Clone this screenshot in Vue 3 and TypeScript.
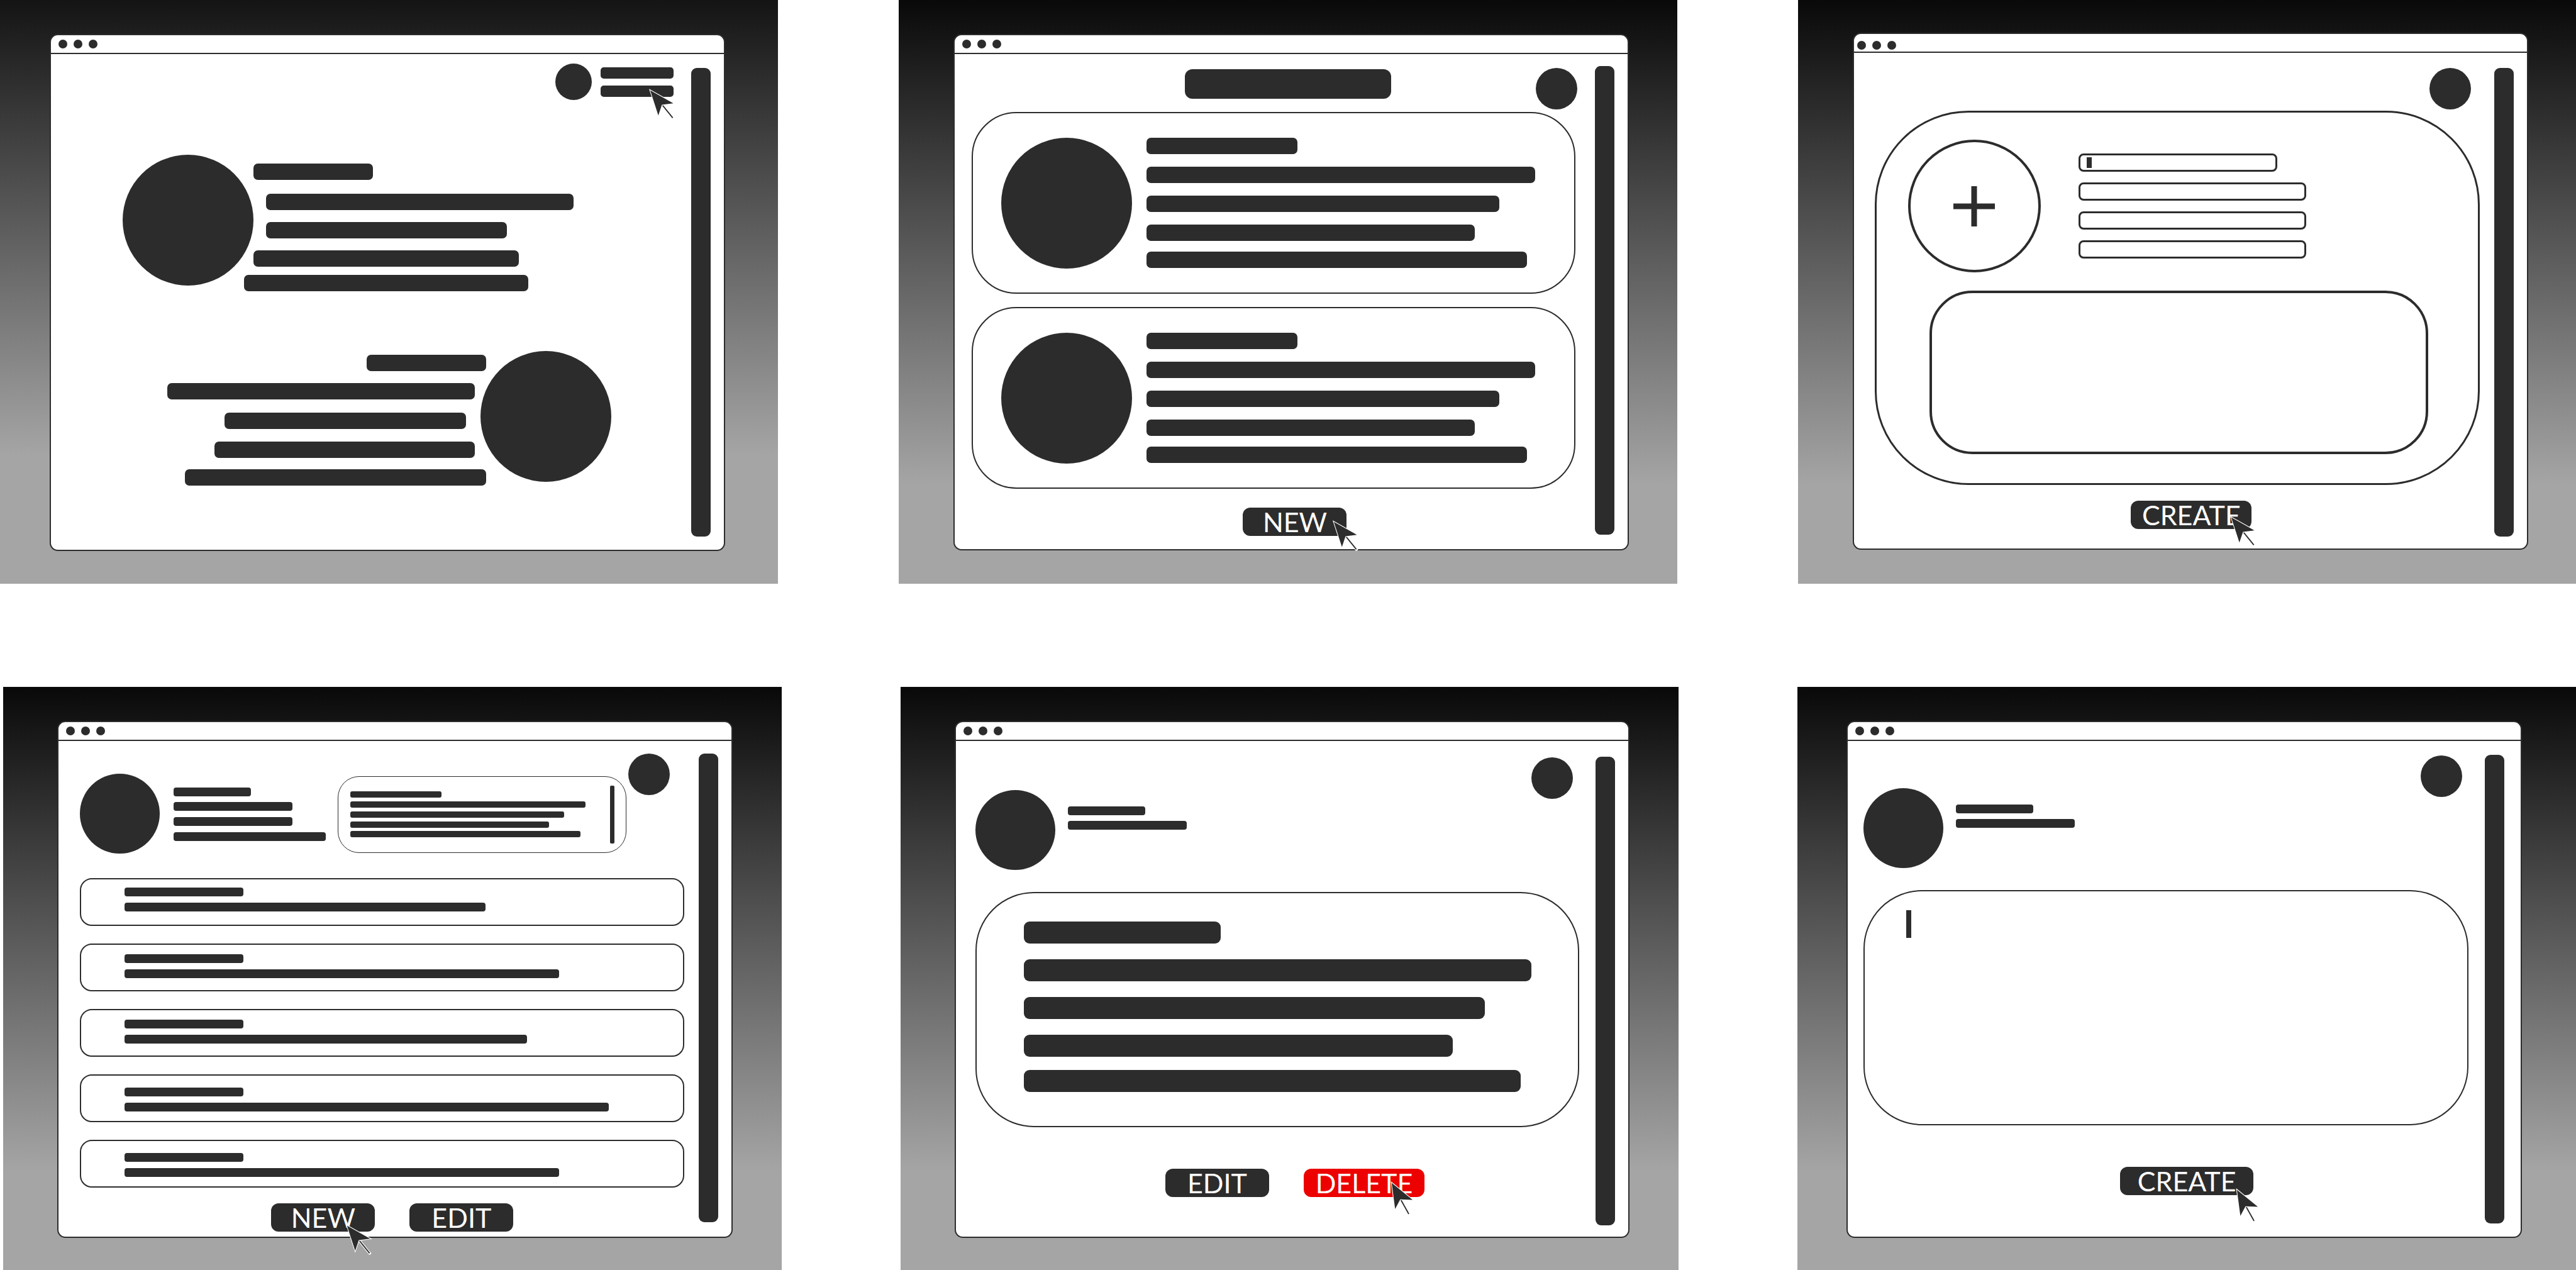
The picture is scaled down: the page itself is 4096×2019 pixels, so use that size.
<script setup lang="ts">
interface Line {
  width: number
  gap?: number
  indent?: number
}

interface Entry {
  top: number
  lines: Line[]
}

const introLines: Line[] = [
  { width: 190, indent: 15 },
  { width: 489, gap: 22, indent: 35 },
  { width: 383, gap: 19, indent: 35 },
  { width: 422, gap: 19, indent: 15 },
  { width: 452, gap: 13 },
]

const aboutLines: Line[] = [
  { width: 190 },
  { width: 489, gap: 19, indent: 18 },
  { width: 384, gap: 21, indent: 32 },
  { width: 414, gap: 20, indent: 18 },
  { width: 479, gap: 18 },
]

const cardLines: Line[] = [
  { width: 240 },
  { width: 618, gap: 20 },
  { width: 561, gap: 20 },
  { width: 522, gap: 20 },
  { width: 605, gap: 17 },
]

const profileLines: Line[] = [
  { width: 123 },
  { width: 189, gap: 9 },
  { width: 189, gap: 10 },
  { width: 242, gap: 10 },
]

const noteLines: Line[] = [
  { width: 145 },
  { width: 374, gap: 6 },
  { width: 340, gap: 6 },
  { width: 316, gap: 6 },
  { width: 366, gap: 5 },
]

const entries: Entry[] = [574, 691, 640, 770, 691].map((width, i) => ({
  top: [13, 15, 15, 19, 19][i],
  lines: [{ width: 189 }, { width, gap: 10 }],
}))

const authorLines: Line[] = [{ width: 123 }, { width: 189, gap: 9 }]

const postLines: Line[] = [
  { width: 313 },
  { width: 807, gap: 25 },
  { width: 733, gap: 25 },
  { width: 682, gap: 25 },
  { width: 790, gap: 21 },
]

const fields = ['Name', 'Breed', 'Age', 'Location']

function lineStyle(line: Line, side: 'Left' | 'Right' = 'Left') {
  return {
    width: `${line.width}px`,
    marginTop: `${line.gap ?? 0}px`,
    [`margin${side}`]: `${line.indent ?? 0}px`,
  }
}
</script>

<template>
  <main class="board">
    <div class="row row-top">
      <!-- Landing page -->
      <section class="screen s1">
        <article class="window">
          <header class="titlebar"><i class="dot" /><i class="dot" /><i class="dot" /></header>
          <div class="body">
            <div class="content">
              <nav class="menu">
                <div class="disc disc-menu" />
                <div class="menu-items">
                  <div class="bar bar-menu" />
                  <div class="bar bar-menu">
                    <svg class="cursor at-menu" viewBox="540 128 136 164" aria-hidden="true">
                      <path class="halo" d="M613 217L665 281" />
                      <path class="tail" d="M610 213L665 281" />
                      <path class="arrow" d="M546 135L668 204L608 212L589 268Z" />
                    </svg>
                  </div>
                </div>
              </nav>
              <div class="feature">
                <div class="disc disc-large" />
                <div class="lines feature-lines">
                  <div v-for="(l, i) in introLines" :key="i" class="bar bar-m" :style="lineStyle(l)" />
                </div>
              </div>
              <div class="feature feature-reverse">
                <div class="lines feature-lines">
                  <div v-for="(l, i) in aboutLines" :key="i" class="bar bar-m" :style="lineStyle(l, 'Right')" />
                </div>
                <div class="disc disc-large" />
              </div>
            </div>
            <div class="scroll" />
          </div>
        </article>
      </section>

      <!-- List of profiles -->
      <section class="screen s2">
        <article class="window">
          <header class="titlebar"><i class="dot" /><i class="dot" /><i class="dot" /></header>
          <div class="body">
            <div class="content">
              <div class="heading">
                <div class="bar bar-title" />
                <div class="disc disc-user" />
              </div>
              <div class="cards">
                <div v-for="n in 2" :key="n" class="card profile-card">
                  <div class="disc disc-large" />
                  <div class="lines">
                    <div v-for="(l, i) in cardLines" :key="i" class="bar bar-m" :style="lineStyle(l)" />
                  </div>
                </div>
              </div>
              <div class="actions">
                <button type="button" class="btn">
                  NEW
                  <svg class="cursor at-new" viewBox="540 128 136 164" aria-hidden="true">
                    <path class="halo" d="M613 217L665 281" />
                    <path class="tail" d="M610 213L665 281" />
                    <path class="arrow" d="M546 135L668 204L608 212L589 268Z" />
                  </svg>
                </button>
              </div>
            </div>
            <div class="scroll" />
          </div>
        </article>
      </section>

      <!-- New profile form -->
      <section class="screen s3">
        <article class="window">
          <header class="titlebar"><i class="dot" /><i class="dot" /><i class="dot" /></header>
          <div class="body">
            <form class="content" @submit.prevent>
              <div class="heading"><div class="disc disc-user" /></div>
              <div class="card form-card">
                <div class="form-top">
                  <button type="button" class="upload" aria-label="Add photo">
                    <svg viewBox="0 0 66 66" aria-hidden="true">
                      <path d="M0 33H66M33 1V65" />
                    </svg>
                  </button>
                  <div class="fields">
                    <div v-for="(f, i) in fields" :key="f" class="field" :class="{ short: i === 0 }">
                      <input type="text" :aria-label="f" />
                      <span v-if="i === 0" class="caret" />
                    </div>
                  </div>
                </div>
                <textarea class="bio" aria-label="Description" />
              </div>
              <div class="actions">
                <button type="submit" class="btn btn-wide">
                  CREATE
                  <svg class="cursor at-create" viewBox="540 128 136 164" aria-hidden="true">
                    <path class="halo" d="M613 217L665 281" />
                    <path class="tail" d="M610 213L665 281" />
                    <path class="arrow" d="M546 135L668 204L608 212L589 268Z" />
                  </svg>
                </button>
              </div>
            </form>
            <div class="scroll" />
          </div>
        </article>
      </section>
    </div>

    <div class="row row-bottom">
      <!-- Profile with its entries -->
      <section class="screen s4">
        <article class="window">
          <header class="titlebar"><i class="dot" /><i class="dot" /><i class="dot" /></header>
          <div class="body">
            <div class="content">
              <div class="profile">
                <div class="disc disc-avatar" />
                <div class="lines profile-lines">
                  <div v-for="(l, i) in profileLines" :key="i" class="bar bar-s" :style="lineStyle(l)" />
                </div>
                <div class="notes">
                  <div class="lines">
                    <div v-for="(l, i) in noteLines" :key="i" class="bar bar-xs" :style="lineStyle(l)" />
                  </div>
                  <div class="notes-scroll" />
                </div>
                <div class="disc disc-user" />
              </div>
              <ul class="entries">
                <li v-for="(e, i) in entries" :key="i" class="entry" :style="{ paddingTop: `${e.top}px` }">
                  <div v-for="(l, j) in e.lines" :key="j" class="bar bar-s" :style="lineStyle(l)" />
                </li>
              </ul>
              <div class="actions">
                <button type="button" class="btn">
                  NEW
                  <svg class="cursor at-new-entry" viewBox="540 128 136 164" aria-hidden="true">
                    <path class="halo" d="M613 217L665 281" />
                    <path class="tail" d="M610 213L665 281" />
                    <path class="arrow" d="M546 135L668 204L608 212L589 268Z" />
                  </svg>
                </button>
                <button type="button" class="btn">EDIT</button>
              </div>
            </div>
            <div class="scroll" />
          </div>
        </article>
      </section>

      <!-- Single entry -->
      <section class="screen s5">
        <article class="window">
          <header class="titlebar"><i class="dot" /><i class="dot" /><i class="dot" /></header>
          <div class="body">
            <div class="content">
              <div class="author">
                <div class="disc disc-avatar" />
                <div class="lines author-lines">
                  <div v-for="(l, i) in authorLines" :key="i" class="bar bar-s" :style="lineStyle(l)" />
                </div>
                <div class="disc disc-user" />
              </div>
              <div class="card post">
                <div v-for="(l, i) in postLines" :key="i" class="bar bar-l" :style="lineStyle(l)" />
              </div>
              <div class="actions">
                <button type="button" class="btn">EDIT</button>
                <button type="button" class="btn btn-wide btn-danger">
                  DELETE
                  <svg class="cursor at-delete" viewBox="1264 130 122 182" aria-hidden="true">
                    <path class="halo" d="M1321 232L1360 302" />
                    <path class="tail" d="M1318 227L1360 302" />
                    <path class="arrow" d="M1270 138L1380 228L1315 225L1288 276Z" />
                  </svg>
                </button>
              </div>
            </div>
            <div class="scroll" />
          </div>
        </article>
      </section>

      <!-- Entry editor -->
      <section class="screen s6">
        <article class="window">
          <header class="titlebar"><i class="dot" /><i class="dot" /><i class="dot" /></header>
          <div class="body">
            <form class="content" @submit.prevent>
              <div class="author">
                <div class="disc disc-avatar" />
                <div class="lines author-lines">
                  <div v-for="(l, i) in authorLines" :key="i" class="bar bar-s" :style="lineStyle(l)" />
                </div>
                <div class="disc disc-user" />
              </div>
              <div class="editor">
                <textarea class="card post" aria-label="Entry text" />
                <span class="caret caret-tall" />
              </div>
              <div class="actions">
                <button type="submit" class="btn btn-widest">
                  CREATE
                  <svg class="cursor at-create-entry" viewBox="1264 130 122 182" aria-hidden="true">
                    <path class="halo" d="M1321 232L1360 302" />
                    <path class="tail" d="M1318 227L1360 302" />
                    <path class="arrow" d="M1270 138L1380 228L1315 225L1288 276Z" />
                  </svg>
                </button>
              </div>
            </form>
            <div class="scroll" />
          </div>
        </article>
      </section>
    </div>
  </main>
</template>

<style>
body {
  background: #fff;
}
</style>

<style scoped>
.board,
.board * {
  box-sizing: border-box;
}

.board {
  --ink: #2c2c2c;
  display: flex;
  flex-direction: column;
  gap: 164px;
  font-family: Lato, "Open Sans", sans-serif;
}

.row {
  display: grid;
  grid-template-columns: repeat(3, minmax(0, 1fr));
}
.row-top {
  column-gap: 192px;
}
.row-bottom {
  column-gap: 189px;
  padding-left: 5px;
}

.screen {
  background: linear-gradient(#090909, #a5a5a5 83%);
}
.s1 {
  padding: 54px 84px 52px 79px;
  background: linear-gradient(#141414, #a5a5a5 78%);
}
.s2 {
  padding: 54px 77px 52px 87px;
}
.s3 {
  padding: 52px 76px 54px 87px;
}
.s4 {
  padding: 54px 78px 51px 86px;
}
.s5 {
  padding: 54px 78px 51px 86px;
}
.s6 {
  padding: 54px 86px 51px 78px;
}

.window {
  border: 2px solid var(--ink);
  border-radius: 13px;
  background: #fff;
}
.titlebar {
  display: flex;
  align-items: center;
  gap: 10px;
  height: 30px;
  padding-left: 12px;
  border-bottom: 2px solid var(--ink);
}
.s3 .titlebar {
  padding: 8px 0 0 5px;
}
.dot {
  width: 14px;
  height: 14px;
  border-radius: 50%;
  background: var(--ink);
}

.body {
  display: flex;
  padding-right: 21px;
}
.content {
  flex: 1;
  min-width: 0;
}
.scroll {
  flex: none;
  width: 31px;
  margin: 22px 0 21px;
  border-radius: 9px;
  background: var(--ink);
}
.s1 .body {
  gap: 28px;
}
.s2 .body {
  gap: 31px;
  padding-left: 27px;
}
.s2 .scroll {
  margin: 19px 0 23px;
}
.s3 .body {
  gap: 23px;
  padding-left: 33px;
}
.s3 .scroll {
  margin: 24px 0 19px;
}
.s4 .body {
  gap: 23px;
  padding-left: 34px;
}
.s4 .scroll {
  margin: 20px 0 23px;
}
.s5 .body {
  gap: 26px;
  padding-left: 31px;
}
.s5 .scroll {
  margin: 25px 0 18px;
}
.s6 .body {
  gap: 26px;
  padding: 0 26px 0 25px;
}

.disc {
  flex: none;
  border-radius: 50%;
  background: var(--ink);
}
.disc-menu {
  width: 58px;
  height: 58px;
}
.disc-user {
  width: 66px;
  height: 66px;
}
.disc-avatar {
  width: 127px;
  height: 127px;
}
.disc-large {
  width: 208px;
  height: 208px;
}

.bar {
  flex: none;
  background: var(--ink);
}
.bar-xs {
  height: 10px;
  border-radius: 3px;
}
.bar-s {
  height: 14px;
  border-radius: 4px;
}
.bar-m {
  height: 26px;
  border-radius: 7px;
}
.bar-l {
  height: 35px;
  border-radius: 9px;
}
.bar-title {
  width: 328px;
  height: 47px;
  margin-top: 2px;
  border-radius: 12px;
}
.bar-menu {
  position: relative;
  width: 116px;
  height: 18px;
  border-radius: 5px;
}

.lines {
  display: flex;
  flex-direction: column;
  align-items: flex-start;
}

/* Landing page */
.s1 .content {
  padding: 15px 0 102px;
}
.menu {
  display: flex;
  justify-content: flex-end;
  align-items: center;
  gap: 14px;
}
.menu-items {
  display: flex;
  flex-direction: column;
  gap: 11px;
}
.feature {
  display: flex;
  align-items: flex-start;
  margin-top: 87px;
  padding-left: 114px;
}
.feature .feature-lines {
  margin-left: -15px;
  padding-top: 14px;
}
.feature-reverse {
  justify-content: flex-end;
  margin-top: 95px;
  padding: 0 99px 0 0;
}
.feature-reverse .feature-lines {
  align-items: flex-end;
  margin: 0 -9px 0 0;
  padding-top: 6px;
}

/* Shared heading row */
.heading {
  display: flex;
  justify-content: flex-end;
}
.card {
  display: block;
  width: 100%;
  border: 2px solid var(--ink);
  background: #fff;
}

/* List of profiles */
.s2 .content {
  padding: 22px 0 21px;
}
.s2 .heading {
  justify-content: space-between;
  margin-right: -3px;
  padding-left: 339px;
}
.cards {
  display: flex;
  flex-direction: column;
  gap: 21px;
  margin-top: 4px;
}
.profile-card {
  display: flex;
  align-items: flex-start;
  gap: 23px;
  padding: 39px 45px 38px;
  border-radius: 71px;
}
.s2 .actions {
  margin-top: 30px;
  padding-left: 68px;
}

/* New profile form */
.s3 .content {
  padding: 24px 0 31px;
}
.s3 .heading {
  padding-right: 14px;
}
.form-card {
  margin-top: 2px;
  padding: 43px 79px 46px 50px;
  border-width: 3px;
  border-radius: 149px;
}
.form-top {
  display: flex;
  gap: 60px;
}
.upload {
  display: flex;
  align-items: center;
  justify-content: center;
  width: 211px;
  height: 211px;
  padding: 0;
  border: 4px solid var(--ink);
  border-radius: 50%;
  background: none;
}
.upload svg {
  width: 66px;
  height: 66px;
  stroke: var(--ink);
  stroke-width: 9;
}
.fields {
  display: flex;
  flex-direction: column;
  gap: 17px;
  padding-top: 22px;
}
.field {
  position: relative;
  width: 362px;
}
.field.short {
  width: 316px;
}
.field input {
  display: block;
  width: 100%;
  height: 29px;
  padding: 0 24px;
  border: 3px solid var(--ink);
  border-radius: 8px;
  background: #fff;
  font: 16px Lato, sans-serif;
}
.caret {
  position: absolute;
  left: 13px;
  top: 6px;
  width: 8px;
  height: 17px;
  background: var(--ink);
}
.bio {
  display: block;
  width: calc(100% - 34px);
  height: 260px;
  margin: 29px 0 0 34px;
  padding: 40px;
  border: 4px solid var(--ink);
  border-radius: 68px;
  background: #fff;
  resize: none;
}
.s3 .actions {
  margin-top: 25px;
  padding-left: 45px;
}

/* Profile with its entries */
.s4 .content {
  padding: 20px 0 8px;
}
.profile {
  display: flex;
  align-items: flex-start;
  padding-right: 23px;
}
.profile .disc-avatar {
  margin-top: 32px;
}
.profile-lines {
  margin: 54px 19px 0 22px;
}
.notes {
  display: flex;
  flex: 1;
  justify-content: space-between;
  height: 122px;
  margin: 36px 3px 0 0;
  padding: 14px 18px 0 19px;
  border: 1px solid #2c2c2c;
  border-radius: 34px;
}
.notes .lines {
  padding-top: 9px;
}
.notes-scroll {
  width: 7px;
  height: 92px;
  border-radius: 2px;
  background: var(--ink);
}
.entries {
  display: flex;
  flex-direction: column;
  gap: 28px;
  margin: 39px 0 0;
  padding: 0;
  list-style: none;
}
.entry {
  height: 76px;
  padding-left: 69px;
  border: 2px solid var(--ink);
  border-radius: 19px;
}
.s4 .actions {
  margin-top: 25px;
  padding-left: 33px;
}

/* Single entry and its editor */
.s5 .content {
  padding: 26px 0 63px;
}
.s6 .content {
  padding: 23px 0 66px;
}
.author {
  display: flex;
  align-items: flex-start;
  gap: 20px;
  padding-right: 10px;
}
.author .disc-avatar {
  margin-top: 52px;
}
.author-lines {
  flex: 1;
  padding-top: 78px;
}
.post {
  height: 374px;
  margin-top: 35px;
  padding: 45px 0 0 75px;
  border-radius: 93px;
  resize: none;
}
.editor {
  position: relative;
}
.caret-tall {
  left: 68px;
  top: 32px;
  height: 44px;
}
.s5 .actions {
  margin-top: 66px;
  padding-left: 56px;
}
.s6 .actions {
  margin-top: 66px;
  padding-left: 66px;
}

/* Buttons */
.actions {
  display: flex;
  justify-content: center;
  gap: 55px;
}
.btn {
  position: relative;
  width: 165px;
  height: 45px;
  padding: 0;
  border: 0;
  border-radius: 12px;
  background: var(--ink);
  color: #fff;
  font: 43px/45px Lato, "Open Sans", sans-serif;
}
.btn-wide {
  width: 192px;
}
.btn-widest {
  width: 212px;
}
.btn-danger {
  background: #ec0000;
}

/* Pointer drawn over the hovered control */
.cursor {
  position: absolute;
  z-index: 1;
  width: 41px;
  height: 50px;
  overflow: visible;
}
.arrow {
  fill: var(--ink);
  stroke: #fff;
  stroke-width: 7;
  paint-order: stroke;
}
.tail {
  fill: none;
  stroke: var(--ink);
  stroke-width: 6;
}
.halo {
  fill: none;
  stroke: #fff;
  stroke-width: 14;
  stroke-linecap: square;
}
.at-menu {
  left: 77px;
  top: 5px;
}
.at-new {
  left: 143px;
  top: 20px;
}
.at-create {
  left: 158px;
  top: 24px;
}
.at-new-entry {
  left: 119px;
  top: 33px;
}
.at-delete,
.at-create-entry {
  width: 37px;
  height: 55px;
}
.at-delete {
  left: 138px;
  top: 20px;
}
.at-create-entry {
  left: 184px;
  top: 34px;
}
</style>
